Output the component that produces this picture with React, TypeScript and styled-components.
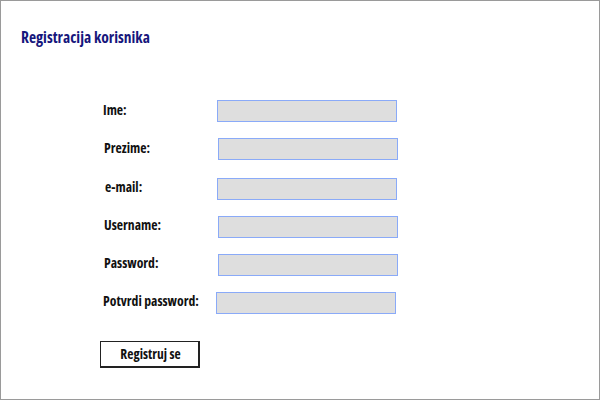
import React from "react";
import styled, { createGlobalStyle } from "styled-components";

const Global = createGlobalStyle`
  html, body { margin: 0; padding: 0; background: #fff; }
  body { font-family: "Open Sans", "DejaVu Sans Condensed", sans-serif; font-stretch: 75%; }
`;

const Frame = styled.div`
  width: 600px;
  height: 400px;
  box-sizing: border-box;
  border: 1px solid #9a9a9a;
  background: #fff;
  padding: 26px 0 0 20px;
`;

const Title = styled.h1`
  margin: 0;
  font-size: 15.5px;
  font-weight: bold;
  font-stretch: 75%;
  color: #16167c;
  line-height: 20px;
`;

const Form = styled.form`
  display: grid;
  grid-template-columns: 114px 180px;
  grid-auto-rows: 22px;
  row-gap: 16px;
  margin: 53px 0 0 82px;
`;

const Label = styled.label<{ $dx?: number; $dy?: number }>`
  display: flex;
  align-items: center;
  font-size: 13.7px;
  font-weight: bold;
  font-stretch: 75%;
  color: #111;
  white-space: nowrap;
  padding: 0 0 3px ${(p) => p.$dx ?? 0}px;
  margin-top: ${(p) => p.$dy ?? 0}px;
`;

const Field = styled.input<{ $dx?: number; $dy?: number }>`
  box-sizing: border-box;
  width: 180px;
  height: 22px;
  margin: ${(p) => p.$dy ?? 0}px 0 0 ${(p) => p.$dx ?? 0}px;
  border: 1px solid #8aaaf8;
  background: #dedede;
  padding: 0;
`;

const Button = styled.button`
  margin: 29px 0 0 79px;
  width: 100px;
  height: 27px;
  box-sizing: border-box;
  background: #fff;
  border: 1px solid #222;
  border-right-width: 2px;
  border-bottom-width: 2px;
  font-family: inherit;
  font-size: 13.5px;
  font-weight: bold;
  font-stretch: 75%;
  color: #111;
  padding: 0 0 0 2px;
`;

const rows: { label: string; ldx: number; fdx: number; dy: number; type: string }[] = [
  { label: "Ime:", ldx: 0, fdx: 0, dy: 0, type: "text" },
  { label: "Prezime:", ldx: 1, fdx: 1, dy: 0, type: "text" },
  { label: "e-mail:", ldx: 2, fdx: 0, dy: 2, type: "email" },
  { label: "Username:", ldx: 1, fdx: 1, dy: 2, type: "text" },
  { label: "Password:", ldx: 1, fdx: 1, dy: 2, type: "password" },
  { label: "Potvrdi password:", ldx: 0, fdx: -1, dy: 2, type: "password" },
];

export default function App() {
  return (
    <>
      <Global />
      <Frame>
        <Title>Registracija korisnika</Title>
        <Form onSubmit={(e) => e.preventDefault()}>
          {rows.map((r) => (
            <React.Fragment key={r.label}>
              <Label $dx={r.ldx} $dy={r.dy}>{r.label}</Label>
              <Field $dx={r.fdx} $dy={r.dy} type={r.type} />
            </React.Fragment>
          ))}
        </Form>
        <Button type="button">Registruj se</Button>
      </Frame>
    </>
  );
}
